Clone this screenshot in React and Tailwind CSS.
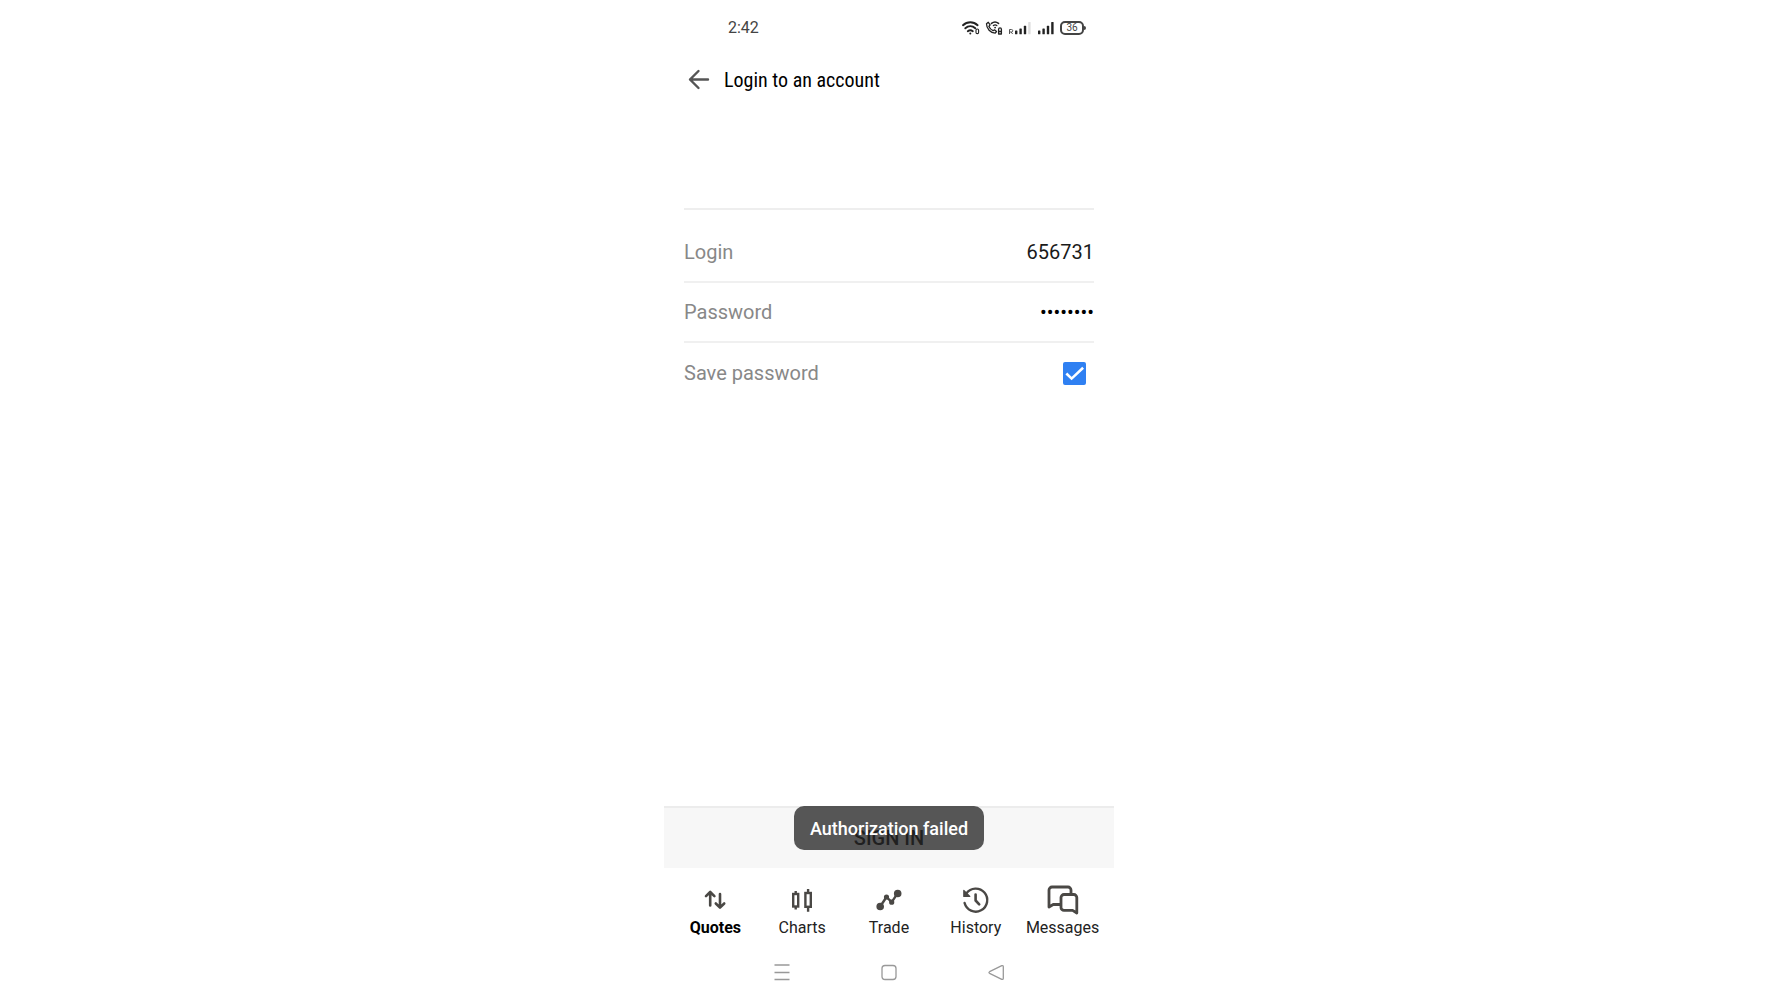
import { useState } from "react"

function WifiIcon() {
  return (
    <svg width="18" height="16" viewBox="0 0 18 16" fill="none" stroke="#222" strokeWidth="1.9" strokeLinecap="round" aria-hidden="true">
      <path d="M1 5.200C5.200 1.200 11.400 1.200 15.600 5.200" />
      <path d="M3.300 8.300c3-2.700 7-2.700 10 0" />
      <path d="M5.800 11.200c1.600-1.200 3.400-1.200 5 0" />
      <circle cx="8.300" cy="13.600" r="1" fill="#222" stroke="none" />
      <rect x="14" y="9" width="2.600" height="4.600" rx="1.200" strokeWidth="1.100" />
    </svg>
  )
}

function WifiCallIcon() {
  return (
    <svg width="18" height="16" viewBox="0 0 18 16" fill="none" stroke="#222" strokeWidth="1.6" strokeLinecap="round" strokeLinejoin="round" aria-hidden="true">
      <path d="M1.500 3.800l1.800-1.500 1.800 2.600-1.200 1.600c.9 2 2.200 3.300 4.200 4.200l1.400-.9 2 1.700-1.300 1.700C5.500 13 1.500 8.800 1.500 3.800z" strokeWidth="1.300" />
      <path d="M6.500 3.400c2.200-1.700 4.800-1.700 7 0" />
      <path d="M8.400 5.500c1-.8 2.400-.8 3.400 0" strokeWidth="1.300" />
      <circle cx="10.100" cy="7.600" r="0.900" fill="#222" stroke="none" />
      <path d="M13.600 14V9.300a1.200 1.200 0 0 1 2.800 0V14M13.600 11.500h2.800M13.600 14h2.800" strokeWidth="1.300" />
    </svg>
  )
}

function SignalIcon({ roaming }) {
  return (
    <svg width={roaming ? 24 : 18} height="16" viewBox={roaming ? "-6 0 24 16" : "0 0 18 16"} aria-hidden="true">
      {roaming && <path d="M-4.500 14V9.500h2a1.200 1.200 0 0 1 0 2.500h-2M-2.800 12l1.400 2" fill="none" stroke="#555" />}
      <g fill="#222">
        <rect x="1" y="10.500" width="2.400" height="3.800" rx="0.600" />
        <rect x="5.400" y="8.500" width="2.400" height="5.800" rx="0.600" />
        <rect x="9.800" y="5.800" width="2.400" height="8.500" rx="0.600" />
        <rect x="14.200" y="2" width="2.400" height="12.300" rx="0.600" fill={roaming ? "#ddd" : "#222"} />
      </g>
    </svg>
  )
}

function BackArrow() {
  return (
    <svg width="22" height="22" viewBox="0 0 22 22" fill="none" stroke="#555" strokeWidth="2.4" strokeLinecap="round" strokeLinejoin="round" aria-hidden="true">
      <path d="M20 10.500H2M10.500 2L2 10.500l8.500 8.500" />
    </svg>
  )
}

function QuotesIcon() {
  return (
    <svg width="32" height="32" viewBox="0 0 32 32" fill="none" stroke="#4a4845" strokeWidth="2.6" strokeLinecap="round" strokeLinejoin="round" aria-hidden="true">
      <path d="M11.200 21.500V8.500M7 12.200l4.200-4.200 4.200 4.200" />
      <path d="M21 10v13M16.800 19.500l4.200 4.200 4.200-4.200" />
    </svg>
  )
}

function ChartsIcon() {
  return (
    <svg width="32" height="32" viewBox="0 0 32 32" fill="none" stroke="#4a4845" strokeWidth="2.4" aria-hidden="true">
      <rect x="7.200" y="10" width="5" height="12.500" />
      <path d="M9.700 7v3M9.700 22.500v3" />
      <rect x="19.400" y="9" width="5.400" height="13.800" />
      <path d="M22.100 5v4M22.100 22.800v5" />
    </svg>
  )
}

function TradeIcon() {
  return (
    <svg width="32" height="32" viewBox="0 0 32 32" fill="#4a4845" stroke="#4a4845" strokeWidth="2.4" strokeLinejoin="round" aria-hidden="true">
      <path d="M7.200 22.500l6.300-9.500 5.200 5.200 6-9" fill="none" />
      <circle cx="7.200" cy="22.500" r="2.600" />
      <circle cx="13.500" cy="13" r="1.400" />
      <circle cx="18.700" cy="18.200" r="1.400" />
      <circle cx="24.700" cy="9.500" r="2.600" />
    </svg>
  )
}

function HistoryIcon() {
  return (
    <svg width="32" height="32" viewBox="0 0 32 32" fill="none" stroke="#4a4845" strokeWidth="2.4" strokeLinecap="round" strokeLinejoin="round" aria-hidden="true">
      <path d="M4.600 19A11.500 11.500 0 1 0 6.400 9.400" />
      <path d="M3.800 6.500v6h6z" fill="#4a4845" strokeWidth="1.200" />
      <path d="M15.600 10.500v6l3.600 3.800" strokeWidth="2.600" />
    </svg>
  )
}

function MessagesIcon() {
  return (
    <svg width="32" height="32" viewBox="0 0 32 32" fill="none" stroke="#4a4845" strokeWidth="2.8" strokeLinecap="round" strokeLinejoin="round" aria-hidden="true">
      <path d="M13.500 20.500H6.200L2 23V6a3 3 0 0 1 3-3h16a3 3 0 0 1 3 3v4.500" />
      <path d="M17 10.500h9.800a3 3 0 0 1 3 3V29l-4.200-2.600H17a3 3 0 0 1-3-3v-9.900a3 3 0 0 1 3-3z" />
    </svg>
  )
}

const tabs = [
  { label: "Quotes", icon: QuotesIcon },
  { label: "Charts", icon: ChartsIcon },
  { label: "Trade", icon: TradeIcon },
  { label: "History", icon: HistoryIcon },
  { label: "Messages", icon: MessagesIcon },
]

export default function App() {
  const [login, setLogin] = useState("656731")
  const [password, setPassword] = useState("password")
  const [savePassword, setSavePassword] = useState(true)
  const [activeTab, setActiveTab] = useState("Quotes")

  return (
    <div className="min-h-screen bg-white font-['Roboto',sans-serif]">
      <div className="mx-auto flex min-h-screen w-full max-w-[450px] flex-col">
        {/* Status bar */}
        <div className="flex h-14 items-center justify-between pr-7 pl-16 text-[#444]">
          <span className="text-base">2:42</span>
          <div className="flex items-center gap-[5px]">
            <WifiIcon />
            <WifiCallIcon />
            <SignalIcon roaming />
            <SignalIcon />
            <div className="flex items-center">
              <span className="flex h-3.5 w-6 items-center justify-center rounded-[5px] border-2 border-[#444] text-[10px] leading-none">36</span>
              <span className="h-1 w-0.5 rounded-r bg-[#444]" />
            </div>
          </div>
        </div>

        <header className="flex h-12 items-center gap-3.5 px-6">
          <button type="button" aria-label="Back">
            <BackArrow />
          </button>
          <h1 className="font-['Roboto_Condensed','Roboto',sans-serif] text-xl text-black">Login to an account</h1>
        </header>

        <form className="flex flex-1 flex-col" onSubmit={(e) => e.preventDefault()}>
          <div className="mx-5 mt-26 flex-1 border-t-2 border-[#eee] text-xl">
            <div className="flex h-[73px] items-center border-b-2 border-[#f0f0f0] pt-3">
              <label htmlFor="login" className="text-[#888]">Login</label>
              <input
                id="login"
                type="text"
                value={login}
                onChange={(e) => setLogin(e.target.value)}
                className="min-w-0 flex-1 bg-transparent text-right text-[#1a1a1a] outline-none"
              />
            </div>
            <div className="flex h-15 items-center border-b-2 border-[#f0f0f0]">
              <label htmlFor="password" className="text-[#888]">Password</label>
              <input
                id="password"
                type="password"
                value={password}
                onChange={(e) => setPassword(e.target.value)}
                className="min-w-0 flex-1 bg-transparent text-right text-black outline-none"
              />
            </div>
            <div className="flex h-15 items-center justify-between pr-2">
              <label htmlFor="save" className="text-[#888]">Save password</label>
              <span className="relative flex">
                <input
                  id="save"
                  type="checkbox"
                  checked={savePassword}
                  onChange={(e) => setSavePassword(e.target.checked)}
                  className="peer size-[23px] appearance-none rounded-xs border-2 border-[#888] checked:border-[#2f80f2] checked:bg-[#2f80f2]"
                />
                <svg className="pointer-events-none absolute inset-0 hidden size-full peer-checked:block" viewBox="0 0 24 24" fill="none" stroke="#fff" strokeWidth="2.7" aria-hidden="true">
                  <path d="M3.500 12l5.500 5.300L21 6" />
                </svg>
              </span>
            </div>
          </div>

          <div className="relative">
            <button type="submit" className="h-[62px] w-full border-t-2 border-[#ececec] bg-[#f7f7f7] text-xl font-medium text-black">
              SIGN IN
            </button>
            <div role="status" className="absolute top-0 left-1/2 flex h-11 w-[190px] -translate-x-1/2 items-center justify-center rounded-[10px] bg-[#292929]/78 pt-0.5 text-lg font-medium whitespace-nowrap text-white">
              Authorization failed
            </div>
          </div>
        </form>

        <nav className="grid h-20 grid-cols-5 px-2 pt-4">
          {tabs.map(({ label, icon: Icon }) => (
            <button
              key={label}
              type="button"
              onClick={() => setActiveTab(label)}
              className={`flex flex-col items-center text-base leading-6 ${activeTab === label ? "font-bold text-black" : "text-[#222]"}`}
            >
              <Icon />
              {label}
            </button>
          ))}
        </nav>

        {/* System navigation */}
        <div className="flex h-13 items-start justify-center gap-[83px] pt-3">
          <button type="button" aria-label="Recent apps">
            <svg width="24" height="24" viewBox="0 0 24 24" stroke="#999" strokeWidth="1.3" aria-hidden="true">
              <path d="M4.500 5h15M4.500 12.500h15M4.500 19.500h15" />
            </svg>
          </button>
          <button type="button" aria-label="Home">
            <svg width="24" height="24" viewBox="0 0 24 24" fill="none" stroke="#999" strokeWidth="1.3" aria-hidden="true">
              <rect x="5" y="5.500" width="14" height="14" rx="3" />
            </svg>
          </button>
          <button type="button" aria-label="Go back">
            <svg width="24" height="24" viewBox="0 0 24 24" fill="none" stroke="#999" strokeWidth="1.3" strokeLinejoin="round" aria-hidden="true">
              <path d="M5.600 11.700L17.800 5.700q1.500-.5 1.500 1v11.600q0 1.500-1.500 1L5.600 13.300q-1.300-.8 0-1.600z" />
            </svg>
          </button>
        </div>
      </div>
    </div>
  )
}
